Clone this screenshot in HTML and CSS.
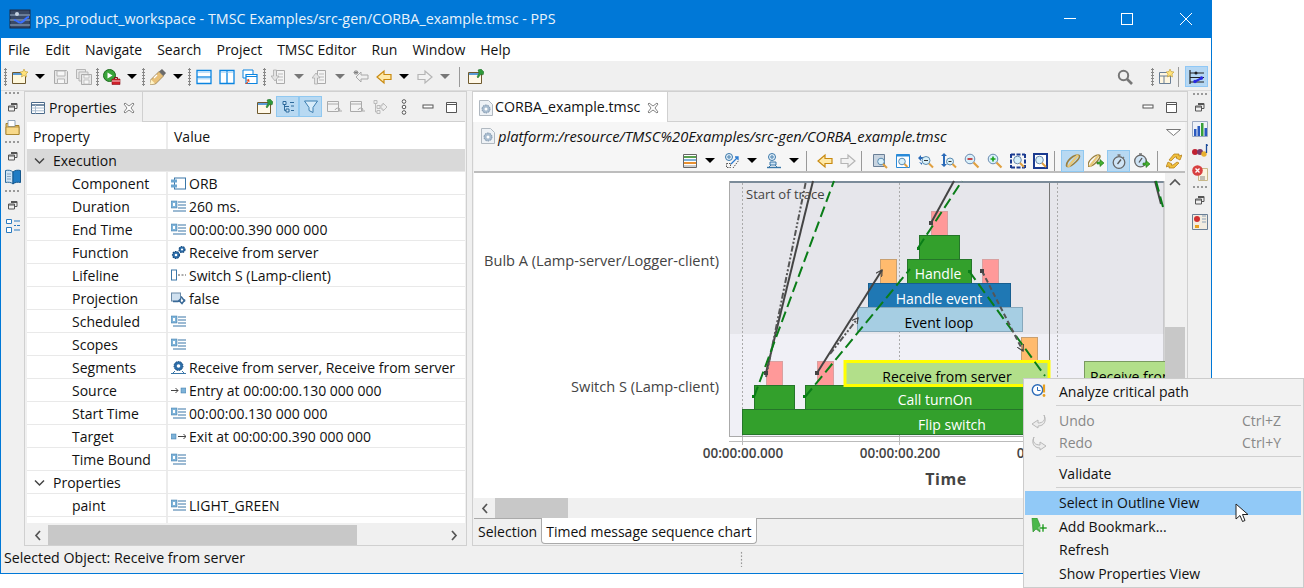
FILE: index.html
```html
<!DOCTYPE html>
<html lang="en">
<head>
<meta charset="utf-8">
<title>PPS</title>
<link rel="stylesheet" href="styles.css">
</head>
<body>
<svg class="defs" width="0" height="0">
  <defs>
    <symbol id="restore" viewBox="0 0 16 16"><path d="M6 4.500h6v5H10M3.500 7h6v5h-6zM3.500 8h6M6 5.500h6" fill="none" stroke="#555"/></symbol>
    <symbol id="min" viewBox="0 0 16 16"><rect x="3" y="6" width="10" height="3" fill="#fff" stroke="#555"/></symbol>
    <symbol id="max" viewBox="0 0 16 16"><path d="M3.500 3.500h10v10h-10zM3.500 5.500h10" fill="#fff" stroke="#555"/></symbol>
    <symbol id="close" viewBox="0 0 12 12"><path d="M2 1l4 3 4-3 1 1-3 4 3 4-1 1-4-3-4 3-1-1 3-4-3-4z" fill="#fff" stroke="#777" stroke-width=".9"/></symbol>
    <symbol id="new" viewBox="0 0 16 16"><path d="M.5 3.500h13v11H.500z" fill="#fff8dc" stroke="#6f5a2e"/><path d="M1 4h12v2H1z" fill="#5b9bd5"/><path d="M12 0l1 2.500 3 .5-2 2 .5 3-2.500-1.500-2.500 1.500.5-3-2-2 3-.5z" fill="#ffe27a" stroke="#c09a30" stroke-width=".6"/></symbol>
    <symbol id="save" viewBox="0 0 16 16"><path d="M1.500 1.500h12l1 1v12h-13z" fill="#e8e8e8" stroke="#aaa"/><path d="M4 2h8v5H4zM4.500 10h7v4.500h-7z" fill="#f6f6f6" stroke="#b5b5b5"/></symbol>
    <symbol id="saveall" viewBox="0 0 16 16"><path d="M.5.500h9v9h-9z" fill="#e8e8e8" stroke="#b5b5b5"/><path d="M3 3h9v9H3z" fill="#e8e8e8" stroke="#b5b5b5"/><path d="M5.500 5.500h10v10h-10z" fill="#e8e8e8" stroke="#aaa"/><path d="M8 6h5v3H8zM8 11h5v4H8z" fill="#f6f6f6" stroke="#b5b5b5" stroke-width=".7"/></symbol>
    <symbol id="run" viewBox="0 0 18 16"><circle cx="6.500" cy="6.500" r="6" fill="#3aa53a" stroke="#1d6a1d"/><path d="M4.500 3.500l5 3-5 3z" fill="#fff"/><path d="M9 10h8v5.500H9z" fill="#d0202a" stroke="#8a1018" stroke-width=".6"/><path d="M9 12h8" stroke="#fff" stroke-width=".8"/><path d="M11.500 10V8.500h3V10" fill="none" stroke="#8a1018"/></symbol>
    <symbol id="pen" viewBox="0 0 16 16"><path d="M0 15.500l1-5L9 2.500l4.500 4.500-8 8z" fill="#e8c078" stroke="#8a7040" stroke-width=".7"/><path d="M9 2.500l3-2.500 4 4-2.500 3z" fill="#6a6a6a"/><path d="M0 15.500l1-5 4 4z" fill="#fff4c8"/><path d="M4 9l3-3" stroke="#fff" stroke-width="1.200"/></symbol>
    <symbol id="lay1" viewBox="0 0 16 16"><path d="M1 1.500h14v13H1z" fill="#fff" stroke="#0a84e0" stroke-width="1.300"/><path d="M1 8h14" stroke="#0a84e0" stroke-width="1.300"/><path d="M2 2.500h12v1.500H2zM2 9h12v1.500H2z" fill="#bfe0fa"/></symbol>
    <symbol id="lay2" viewBox="0 0 16 16"><path d="M1 1.500h14v13H1z" fill="#fff" stroke="#0a84e0" stroke-width="1.300"/><path d="M8 1.500v13" stroke="#0a84e0" stroke-width="1.300"/><path d="M2 2.500h5.300v1.500H2zM8.700 2.500H14v1.500H8.700z" fill="#bfe0fa"/></symbol>
    <symbol id="lay3" viewBox="0 0 16 16"><path d="M1 1h10v8H1z" fill="#fff" stroke="#0a84e0"/><path d="M4 5.500h11v9H4z" fill="#fff" stroke="#0a84e0" stroke-width="1.200"/><path d="M4 7.500h11" stroke="#0a84e0"/><path d="M7 10l-3 1 2 1-3 3h2l2-3 1 2z" fill="#e24a1c"/></symbol>
    <symbol id="docdn" viewBox="0 0 16 16"><path d="M5.500 1.500h8v13h-8z" fill="#f4f4f4" stroke="#aaa"/><path d="M7 5h5M7 8h5M7 11h5" stroke="#bbb"/><path d="M2.500 1v6H0l4 5 4-5H5.500V1z" fill="#e4e4e4" stroke="#a5a5a5" stroke-width=".7"/></symbol>
    <symbol id="docup" viewBox="0 0 16 16"><path d="M5.500 1.500h8v13h-8z" fill="#f4f4f4" stroke="#aaa"/><path d="M7 5h5M7 8h5M7 11h5" stroke="#bbb"/><path d="M2.500 15V9H0l4-5 4 5H5.500v6z" fill="#e4e4e4" stroke="#a5a5a5" stroke-width=".7"/></symbol>
    <symbol id="backstar" viewBox="0 0 16 16"><path d="M15 6h-7V3L3 8l5 5v-3h7z" fill="#efefef" stroke="#a8a8a8"/><path d="M3 1v5M.5 3.500h5M1 2l4 3M5 2L1 5" stroke="#777" stroke-width=".8"/></symbol>
    <symbol id="back" viewBox="0 0 16 16"><path d="M15 5.500H8V2L1 8l7 6v-3.500h7z" fill="#ffe9a8" stroke="#c98a10" stroke-width="1.200"/></symbol>
    <symbol id="fwd" viewBox="0 0 16 16"><path d="M1 5.500h7V2l7 6-7 6v-3.500H1z" fill="#f2f2f2" stroke="#b5b5b5" stroke-width="1.200"/></symbol>
    <symbol id="pinwin" viewBox="0 0 16 16"><path d="M.5 3.500h13v11H.500z" fill="#fff8e8" stroke="#6f5a2e"/><path d="M1 4h12v2H1z" fill="#5b9bd5"/><path d="M10 1l3-1 3 3-1 3-2-1-3 4-1-1 2-4z" fill="#2f9a3a" stroke="#1e6a28" stroke-width=".5"/></symbol>
    <symbol id="search" viewBox="0 0 16 16"><circle cx="6.500" cy="6.500" r="4.700" fill="none" stroke="#777" stroke-width="2"/><path d="M10 10l5 5" stroke="#777" stroke-width="2.600"/></symbol>
    <symbol id="persp" viewBox="0 0 16 16"><path d="M1.500 3.500h11v11h-11zM1.500 7h11M6 7v7.500" fill="#fff6e0" stroke="#6a7f96"/><path d="M12 0l1 2.500 3 .5-2 2 .5 3-2.500-1.500-2.500 1.500.5-3-2-2 3-.5z" fill="#ffe27a" stroke="#c09a30" stroke-width=".6"/></symbol>
    <symbol id="ppsp" viewBox="0 0 16 16"><path d="M1 1v14" stroke="#222" stroke-width="1.200"/><path d="M1 4h14M1 8.500h14M1 13h14" stroke="#222"/><circle cx="7" cy="4" r="1.500" fill="#222"/><path d="M5 13l8-4" stroke="#2a2ae0" stroke-width="2"/><circle cx="12.500" cy="9" r="1.700" fill="#2a2ae0"/><circle cx="6" cy="12.500" r="1.700" fill="#2a2ae0"/></symbol>
    <symbol id="table" viewBox="0 0 16 16"><path d="M1.500 2.500h13v11h-13z" fill="#fff" stroke="#4a6a8a"/><path d="M1.500 5h13" stroke="#4a6a8a" stroke-width="1.500"/><path d="M1.500 8h13M1.500 10.800h13M5.500 5v8.500" stroke="#a8bccf"/></symbol>
    <symbol id="treebtn" viewBox="0 0 16 16"><path d="M3 2.500h3v3H3zM6 10h3v3H6zM10 3.500h4M11 7h3M11 11.500h3M4.500 5.500v6H6M4.500 7.500H9" fill="#cfe6f7" stroke="#2d6a9c"/></symbol>
    <symbol id="filter" viewBox="0 0 16 16"><path d="M1.500 2h13L10 8.500v5L6 11.500v-3z" fill="#d8ecfa" stroke="#3d7eb0"/></symbol>
    <symbol id="graydoc1" viewBox="0 0 16 16"><path d="M1.500 2.500h11v10h-11z" fill="#f3f3f3" stroke="#aaa"/><path d="M1.500 5h11" stroke="#aaa"/><path d="M9 11a3 3 0 0 1 5-1l-1 2h3" fill="none" stroke="#aaa"/></symbol>
    <symbol id="graytree" viewBox="0 0 16 16"><path d="M2 1.500h3v3H2zM5 6.500h3v3H5zM5 11.500h3v3H5zM3.500 4.500V13H5" fill="#eee" stroke="#bbb"/><path d="M15 8l-4-4v2H9v4h2v2z" fill="#eee" stroke="#bbb"/></symbol>
    <symbol id="dots" viewBox="0 0 8 16"><circle cx="4" cy="2.500" r="1.800" fill="#fff" stroke="#555"/><circle cx="4" cy="8" r="1.800" fill="#fff" stroke="#555"/><circle cx="4" cy="13.500" r="1.800" fill="#fff" stroke="#555"/></symbol>
    <symbol id="listv" viewBox="0 0 15 13"><rect x="0" y="1" width="6" height="7" fill="#7fb3d8" stroke="#3a77a8" stroke-width=".5"/><rect x="2" y="3" width="2" height="3" fill="#fff"/><path d="M7 2h8M7 5h8M7 8h8M2 11h13" stroke="#3a77a8" stroke-width="1.100"/></symbol>
    <symbol id="comp" viewBox="0 0 15 12"><rect x="3.500" y=".5" width="11" height="11" fill="#fff" stroke="#3a77a8"/><rect x="0" y="2" width="6" height="3" fill="#6da6d0"/><rect x="0" y="7" width="6" height="3" fill="#6da6d0"/></symbol>
    <symbol id="gears" viewBox="0 0 15 15"><circle cx="5" cy="10" r="3.500" fill="#2d6da8" stroke="#174a7c" stroke-width="1.200" stroke-dasharray="1.500 1"/><circle cx="5" cy="10" r="1.300" fill="#fff"/><circle cx="11" cy="4.500" r="3" fill="#2d6da8" stroke="#174a7c" stroke-width="1.200" stroke-dasharray="1.500 1"/><circle cx="11" cy="4.500" r="1.100" fill="#fff"/></symbol>
    <symbol id="life" viewBox="0 0 15 12"><rect x=".5" y=".5" width="5" height="10" fill="#fff" stroke="#3a77a8"/><path d="M7 5.500h2M10.500 5.500h2M14 5.500h1" stroke="#555"/></symbol>
    <symbol id="proj" viewBox="0 0 15 12"><rect x=".5" y=".5" width="9" height="8" fill="#cfe0ef" stroke="#6a8aa8"/><path d="M2 9h5l3-3M8 8l3 3 3-4M10 4l4 5" fill="none" stroke="#3a6a98" stroke-width="1.500"/></symbol>
    <symbol id="seg" viewBox="0 0 15 15"><circle cx="7.500" cy="6" r="4.500" fill="#2d6da8" stroke="#174a7c" stroke-dasharray="1.500 1"/><circle cx="7.500" cy="6" r="1.800" fill="#fff"/><path d="M0 13.500h15" stroke="#3a77a8"/><path d="M2 13l2-2M13 13l-2-2" stroke="#3a77a8"/></symbol>
    <symbol id="src" viewBox="0 0 15 9"><path d="M0 4.500h7M4.500 2l2.500 2.500L4.500 7" fill="none" stroke="#444"/><rect x="10" y="2" width="5" height="5" fill="#7fb3d8" stroke="#3a77a8" stroke-width=".5"/></symbol>
    <symbol id="tgt" viewBox="0 0 15 9"><rect x="0" y="2" width="5" height="5" fill="#7fb3d8" stroke="#3a77a8" stroke-width=".5"/><path d="M7 4.500h8M12.500 2l2.500 2.500L12.500 7" fill="none" stroke="#444"/></symbol>
    <symbol id="tmsc" viewBox="0 0 14 16"><path d="M.5.500h9l4 4v11H.500z" fill="#eef2f6" stroke="#b0b8c0"/><circle cx="7" cy="9" r="4" fill="#a8bccf" stroke="#7a90a8" stroke-dasharray="1.500 1"/><circle cx="7" cy="9" r="1.500" fill="#fff"/></symbol>
    <symbol id="tb-table" viewBox="0 0 16 16"><path d="M1.500 1.500h13v13h-13z" fill="#fff" stroke="#666"/><path d="M2 4h12" stroke="#5aa050" stroke-width="2"/><path d="M2 7h12" stroke="#7fb0d8" stroke-width="2"/><path d="M2 10h12" stroke="#e89030" stroke-width="2"/><path d="M2 13h12" stroke="#bbb" stroke-width="1.500"/></symbol>
    <symbol id="tb-at1" viewBox="0 0 16 16"><circle cx="5" cy="4" r="3.500" fill="#e4f0fa" stroke="#3a77a8"/><circle cx="5" cy="4" r="1.200" fill="none" stroke="#3a77a8"/><path d="M2.500 10.500h4v4h-4zM9 15l6-8" fill="none" stroke="#555" stroke-dasharray="1.500 1"/><path d="M7 11l7-7M11 4h3v3" fill="none" stroke="#2a7ad0" stroke-width="1.300"/></symbol>
    <symbol id="tb-at2" viewBox="0 0 16 16"><circle cx="6" cy="4" r="3.500" fill="#e4f0fa" stroke="#3a77a8"/><circle cx="6" cy="4" r="1.200" fill="none" stroke="#3a77a8"/><path d="M4 9h6v3H4z" fill="#d0e4f4" stroke="#3a77a8"/><path d="M1 14.500h14" stroke="#3a77a8" stroke-width="1.400"/><path d="M3 14l2-2M11 14l-2-2" stroke="#3a77a8"/></symbol>
    <symbol id="mag-page" viewBox="0 0 16 16"><path d="M1.500 1.500h11v12h-11z" fill="#c8d4e0" stroke="#6a7f96"/><circle cx="9" cy="8.500" r="3.300" fill="#d8f0fa" stroke="#5a8ab0"/><path d="M11 11l4 4" stroke="#e0a040" stroke-width="2"/></symbol>
    <symbol id="mag-box" viewBox="0 0 16 16"><path d="M1.500 1.500h13v13h-13z" fill="#fff" stroke="#2a8ad8"/><path d="M1.500 1.500h13v2h-13z" fill="#2a8ad8"/><circle cx="7" cy="8.500" r="3.300" fill="#d8f0fa" stroke="#5a8ab0"/><path d="M9.500 11l3 3" stroke="#e0a040" stroke-width="2"/></symbol>
    <symbol id="mag-h" viewBox="0 0 16 16"><path d="M0 5l3-3v2h3v2H3v2z" fill="#2a6ab8"/><circle cx="8" cy="7.500" r="4" fill="#d8f0fa" stroke="#5a8ab0"/><path d="M6 7.500h4" stroke="#333"/><path d="M11 10.500l4 4" stroke="#e0a040" stroke-width="2"/><path d="M1 9l3 3v-2" fill="#2a6ab8"/></symbol>
    <symbol id="mag-v" viewBox="0 0 16 16"><path d="M3 0l3 3H4v8h2l-3 3-3-3h2V3H0z" fill="#2a6ab8"/><circle cx="9" cy="8.500" r="3.500" fill="#d8f0fa" stroke="#5a8ab0"/><path d="M7.500 8.500h3" stroke="#333"/><path d="M11.500 11l3.500 3.500" stroke="#e0a040" stroke-width="2"/></symbol>
    <symbol id="mag-m" viewBox="0 0 16 16"><circle cx="6" cy="6" r="4.800" fill="#d8f0fa" stroke="#6a8ab0"/><path d="M3.500 6h5" stroke="#c02020" stroke-width="1.600"/><path d="M9.500 9.500l5 5" stroke="#e0a040" stroke-width="2.200"/></symbol>
    <symbol id="mag-p" viewBox="0 0 16 16"><circle cx="6" cy="6" r="4.800" fill="#d8f0fa" stroke="#6a8ab0"/><path d="M3.500 6h5M6 3.500v5" stroke="#18a018" stroke-width="1.600"/><path d="M9.500 9.500l5 5" stroke="#e0a040" stroke-width="2.200"/></symbol>
    <symbol id="mag-fit1" viewBox="0 0 16 16"><path d="M1 1.500h14M1 14.500h14M1 1v14M15 1v14" stroke="#1a3a90" stroke-width="2" stroke-dasharray="4 1.500"/><circle cx="7.500" cy="7" r="3.800" fill="#d8f0fa" stroke="#6a8ab0"/><path d="M10 10l4 4" stroke="#e0a040" stroke-width="2"/></symbol>
    <symbol id="mag-fit2" viewBox="0 0 16 16"><rect width="15" height="16" fill="#1a3a90"/><rect x="2" y="2" width="11" height="12" fill="#fff"/><circle cx="6.500" cy="7" r="3.800" fill="#d8f0fa" stroke="#6a8ab0"/><path d="M9 10l4 4" stroke="#e0a040" stroke-width="2"/></symbol>
    <symbol id="link" viewBox="0 0 16 16"><path d="M1.500 12.500c0-3 3.500-7 6.500-9 3-2 6.500-2 6.500 0s-3 5-6 7.500-7 3.500-7 1.500z" fill="none" stroke="#9a8040" stroke-width="1.600"/><path d="M3 14l10-12" stroke="#e8c878" stroke-width="2.400"/></symbol>
    <symbol id="link-go" viewBox="0 0 16 16"><path d="M0 12.500c0-3 3-7 6-9 3-2 6-2 6 0s-3 5-5 7-7 4-7 2z" fill="none" stroke="#9a8040" stroke-width="1.500"/><path d="M1.500 13.500l9-11" stroke="#e8c878" stroke-width="2.200"/><path d="M9 9h3V6.500l4 3.500-4 3.500V11H9z" fill="#44b030" stroke="#207018" stroke-width=".6"/></symbol>
    <symbol id="watch" viewBox="0 0 16 16"><circle cx="8" cy="9.500" r="5.800" fill="#cfe4f5" stroke="#666" stroke-width="1.300"/><path d="M6.500 2h3M8 2v2M13 4l-1.500 1.500" stroke="#777" stroke-width="1.300"/><path d="M6.500 11L10 6.500" stroke="#555" stroke-width="1.300"/></symbol>
    <symbol id="watch-go" viewBox="0 0 16 16"><circle cx="6.500" cy="8" r="5.800" fill="#cfe4f5" stroke="#666" stroke-width="1.300"/><path d="M5 1h3M6.500 1v2" stroke="#777" stroke-width="1.300"/><path d="M5 9.500L8 5" stroke="#555" stroke-width="1.300"/><path d="M9 10h3V7.500l4 3.500-4 3.500V12H9z" fill="#44b030" stroke="#207018" stroke-width=".6"/></symbol>
    <symbol id="sync" viewBox="0 0 16 16"><path d="M8 1h5v2l3-1-2 5-4-2 1-1H9L5 8 3 7z" fill="#f0c040" stroke="#b07810" stroke-width=".7"/><path d="M8 15H3v-2l-3 1 2-5 4 2-1 1h2l4-3 2 1z" fill="#f0c040" stroke="#b07810" stroke-width=".7"/></symbol>
    <symbol id="t-folder" viewBox="0 0 16 16"><path d="M1 3.500h6l2 2h5v9H1z" fill="#f3c76a" stroke="#a37f28"/><path d="M3 .5h7v6H3z" fill="#fff" stroke="#7a90a8" stroke-width=".8"/><path d="M1 7h13v7.500H1z" fill="#f8d98a" stroke="#a37f28" stroke-width=".8"/></symbol>
    <symbol id="t-book" viewBox="0 0 16 16"><path d="M8 3C6 1 3 1 .5 1.500v12C3 13 6 13 8 15z" fill="#cfe4f5" stroke="#2a6a9c"/><path d="M8 3c2-2 5-2 7.500-1.500v12C13 13 10 13 8 15z" fill="#1f7cc4" stroke="#15578c"/><path d="M2 5h4M2 7.500h4M2 10h4" stroke="#6a8aa8" stroke-width=".7"/></symbol>
    <symbol id="t-outline" viewBox="0 0 16 16"><path d="M1.500 1.500h5v4h-5zM1.500 9.500h5v5h-5z" fill="#fff" stroke="#2a7ac0"/><path d="M9 3h6M9 7.500h2M12 7.500h3M9 12h6" stroke="#2a7ac0"/></symbol>
    <symbol id="t-chart" viewBox="0 0 16 16"><path d="M.5.500h15v15H.500z" fill="#eef2f8" stroke="#9aa8c0"/><path d="M2 15V8h2.500v7zM5.500 15V5H8v10z" fill="#2a5ac0"/><path d="M9 15V2h2.500v13z" fill="#38a038"/><path d="M12.500 15V7H15v8z" fill="#2a5ac0"/></symbol>
    <symbol id="t-notes" viewBox="0 0 16 16"><circle cx="3" cy="9" r="3" fill="#c02030"/><circle cx="8" cy="9" r="3" fill="#7a3a6a"/><circle cx="12" cy="11" r="2.700" fill="#e8b030"/><path d="M14.500 1v9" stroke="#1a4a9a" stroke-width="1.300"/><path d="M14.500 1l1.500 2" stroke="#1a4a9a"/></symbol>
    <symbol id="t-err" viewBox="0 0 16 16"><path d="M6.500 3.500h9v12h-9z" fill="#fbf4e0" stroke="#c8b888"/><circle cx="5.500" cy="5.500" r="5.300" fill="#d84040"/><path d="M3.500 3.500l4 4M7.500 3.500l-4 4" stroke="#fff" stroke-width="1.300"/><path d="M8 12h5M8 14h5" stroke="#888"/></symbol>
    <symbol id="t-pic" viewBox="0 0 16 16"><path d="M.5.500h15v15H.500z" fill="#f2ece0" stroke="#6a7f96"/><circle cx="5" cy="5" r="3" fill="#d03030"/><path d="M3 14v-3h4v3z" fill="#e8a020"/><path d="M10 2h4M10 5h4M10 8h4" stroke="#8aa0b8"/></symbol>
    <symbol id="m-crit" viewBox="0 0 16 16"><circle cx="6.500" cy="7" r="5.200" fill="#fff" stroke="#2a6ab8" stroke-width="1.400"/><path d="M6.500 4v3.500h3" fill="none" stroke="#2a6ab8"/><path d="M13 1.500v8" stroke="#e8a020" stroke-width="2.200"/><circle cx="13" cy="12.500" r="1.400" fill="#e8a020"/></symbol>
    <symbol id="m-undo" viewBox="0 0 16 16"><path d="M13 2c2 5-1 8-6 8V7L1 11l6 4v-2c6 0 9-5 6-11z" fill="#ececec" stroke="#b8b8b8"/></symbol>
    <symbol id="m-redo" viewBox="0 0 16 16"><path d="M3 2C1 7 4 10 9 10V7l6 4-6 4v-2C3 13 0 8 3 2z" fill="#ececec" stroke="#b8b8b8"/></symbol>
    <symbol id="m-book" viewBox="0 0 16 16"><path d="M1 0h5l3 7v7L5 11 2 14z" fill="#4ab84a" stroke="#2a8a2a" stroke-width=".6"/><path d="M8 9h3V6h2v3h3v2h-3v3h-2v-3H8z" fill="#2ea02e" stroke="#fff" stroke-width=".5"/></symbol>
    <symbol id="app" viewBox="0 0 22 22"><rect x="1" y="2" width="20" height="18" fill="#3a4a66" stroke="#1c2a44"/><path d="M1 7h20M1 12h20M1 17h20" stroke="#9ab0c8"/><path d="M5 12c4 0 4 4 8 2s3-5 7-5" fill="none" stroke="#3a70ff" stroke-width="2"/><circle cx="8" cy="6" r="2" fill="#c8d4e4"/></symbol>
  </defs>
</svg>

<div class="window">
  <header class="titlebar">
    <svg class="app-ic"><use href="#app"/></svg>
    <span class="title">pps_product_workspace - TMSC Examples/src-gen/CORBA_example.tmsc - PPS</span>
    <div class="winctl">
      <svg width="58" height="38"><path d="M23 18.500h12" stroke="#fff"/></svg>
      <svg width="59" height="38"><rect x="22.500" y="13.500" width="11" height="11" fill="none" stroke="#fff"/></svg>
      <svg width="53" height="38"><path d="M22 13l12 12M34 13L22 25" stroke="#fff"/></svg>
    </div>
  </header>

  <nav class="menubar">
    <span>File</span><span>Edit</span><span>Navigate</span><span>Search</span><span>Project</span><span>TMSC Editor</span><span>Run</span><span>Window</span><span>Help</span>
  </nav>

  <div class="toolbar">
    <i class="grip"></i>
    <span class="b"><svg class="ic"><use href="#new"/></svg></span><i class="ar"></i>
    <span class="b"><svg class="ic"><use href="#save"/></svg></span>
    <span class="b"><svg class="ic"><use href="#saveall"/></svg></span>
    <i class="grip"></i>
    <span class="b"><svg class="ic wide"><use href="#run"/></svg></span><i class="ar"></i>
    <i class="grip"></i>
    <span class="b"><svg class="ic"><use href="#pen"/></svg></span><i class="ar"></i>
    <i class="grip"></i>
    <span class="b"><svg class="ic"><use href="#lay1"/></svg></span>
    <span class="b"><svg class="ic"><use href="#lay2"/></svg></span>
    <span class="b"><svg class="ic"><use href="#lay3"/></svg></span>
    <i class="grip g2"></i>
    <span class="b"><svg class="ic"><use href="#docdn"/></svg></span><i class="ar off"></i>
    <span class="b"><svg class="ic"><use href="#docup"/></svg></span><i class="ar off"></i>
    <span class="b"><svg class="ic"><use href="#backstar"/></svg></span>
    <span class="b"><svg class="ic"><use href="#back"/></svg></span><i class="ar"></i>
    <span class="b"><svg class="ic"><use href="#fwd"/></svg></span><i class="ar off"></i>
    <i class="sep"></i>
    <span class="b"><svg class="ic"><use href="#pinwin"/></svg></span>
    <span class="spring"></span>
    <span class="b"><svg class="ic"><use href="#search"/></svg></span>
    <i class="grip g3"></i>
    <span class="b bn"><svg class="ic"><use href="#persp"/></svg></span>
    <i class="sep s2"></i>
    <span class="pick"><svg class="ic"><use href="#ppsp"/></svg></span>
  </div>

  <div class="workarea">
    <aside class="trim">
      <i class="hgrip"></i>
      <svg class="ic"><use href="#restore"/></svg>
      <svg class="ic"><use href="#t-folder"/></svg>
      <i class="hgrip"></i>
      <svg class="ic"><use href="#restore"/></svg>
      <svg class="ic"><use href="#t-book"/></svg>
      <i class="hgrip"></i>
      <svg class="ic"><use href="#restore"/></svg>
      <svg class="ic"><use href="#t-outline"/></svg>
    </aside>

    <section class="panel props">
      <div class="phead">
        <div class="ptab">
          <svg class="ic"><use href="#table"/></svg>
          <span>Properties</span>
          <svg class="x"><use href="#close"/></svg>
        </div>
        <div class="pbar">
          <span class="vb"><svg class="ic"><use href="#pinwin"/></svg></span>
          <span class="vb on"><svg class="ic"><use href="#treebtn"/></svg></span>
          <span class="vb on"><svg class="ic"><use href="#filter"/></svg></span>
          <span class="vb"><svg class="ic"><use href="#graydoc1"/></svg></span>
          <span class="vb"><svg class="ic"><use href="#graydoc1"/></svg></span>
          <span class="vb"><svg class="ic"><use href="#graytree"/></svg></span>
          <span class="vb dots"><svg class="dot"><use href="#dots"/></svg></span>
          <span class="vb"><svg class="ic"><use href="#min"/></svg></span>
          <span class="vb"><svg class="ic"><use href="#max"/></svg></span>
        </div>
      </div>
      <div class="tbl">
        <div class="row head"><div class="k">Property</div><div class="v">Value</div></div>
        <div class="row grp sel"><div class="k"><svg class="chev"><path d="M1 1.500l4.500 4.500L10 1.500" fill="none" stroke="#444" stroke-width="1.500"/></svg>Execution</div><div class="v"></div></div>
        <div class="row"><div class="k">Component</div><div class="v"><svg class="vi"><use href="#comp"/></svg>ORB</div></div>
        <div class="row"><div class="k">Duration</div><div class="v"><svg class="vi"><use href="#listv"/></svg>260 ms.</div></div>
        <div class="row"><div class="k">End Time</div><div class="v"><svg class="vi"><use href="#listv"/></svg>00:00:00.390 000 000</div></div>
        <div class="row"><div class="k">Function</div><div class="v"><svg class="vi"><use href="#gears"/></svg>Receive from server</div></div>
        <div class="row"><div class="k">Lifeline</div><div class="v"><svg class="vi"><use href="#life"/></svg>Switch S (Lamp-client)</div></div>
        <div class="row"><div class="k">Projection</div><div class="v"><svg class="vi"><use href="#proj"/></svg>false</div></div>
        <div class="row"><div class="k">Scheduled</div><div class="v"><svg class="vi"><use href="#listv"/></svg></div></div>
        <div class="row"><div class="k">Scopes</div><div class="v"><svg class="vi"><use href="#listv"/></svg></div></div>
        <div class="row"><div class="k">Segments</div><div class="v"><svg class="vi"><use href="#seg"/></svg>Receive from server, Receive from server</div></div>
        <div class="row"><div class="k">Source</div><div class="v"><svg class="vi"><use href="#src"/></svg>Entry at 00:00:00.130 000 000</div></div>
        <div class="row"><div class="k">Start Time</div><div class="v"><svg class="vi"><use href="#listv"/></svg>00:00:00.130 000 000</div></div>
        <div class="row"><div class="k">Target</div><div class="v"><svg class="vi"><use href="#tgt"/></svg>Exit at 00:00:00.390 000 000</div></div>
        <div class="row"><div class="k">Time Bound</div><div class="v"><svg class="vi"><use href="#listv"/></svg></div></div>
        <div class="row grp"><div class="k"><svg class="chev"><path d="M1 1.500l4.500 4.500L10 1.500" fill="none" stroke="#444" stroke-width="1.500"/></svg>Properties</div><div class="v"></div></div>
        <div class="row"><div class="k">paint</div><div class="v"><svg class="vi"><use href="#listv"/></svg>LIGHT_GREEN</div></div>
        <div class="row stub"><div class="k"></div><div class="v"></div></div>
      </div>
      <div class="hscroll hs-props">
        <svg class="sa"><path d="M6 2L2 6.500 6 11" fill="none" stroke="#555" stroke-width="1.700"/></svg>
        <div class="track"><div class="thumb th-props"></div></div>
        <svg class="sa"><path d="M2 2l4 4.500L2 11" fill="none" stroke="#555" stroke-width="1.700"/></svg>
      </div>
    </section>

    <section class="panel editor">
      <div class="phead ehead">
        <div class="etab">
          <svg class="ic"><use href="#tmsc"/></svg>
          <span>CORBA_example.tmsc</span>
          <svg class="x"><use href="#close"/></svg>
        </div>
        <div class="pbar">
          <span class="vb"><svg class="ic"><use href="#min"/></svg></span>
          <span class="vb"><svg class="ic"><use href="#max"/></svg></span>
        </div>
      </div>
      <div class="ebody">
        <div class="crumb">
          <svg class="ic"><use href="#tmsc"/></svg>
          <em>platform:/resource/TMSC%20Examples/src-gen/CORBA_example.tmsc</em>
          <svg class="tri" width="16" height="8"><path d="M.5.500h14L7.500 6.500z" fill="#fff" stroke="#777"/></svg>
        </div>
        <div class="etools">
          <span class="b"><svg class="ic"><use href="#tb-table"/></svg></span><i class="ar a2"></i>
          <span class="b"><svg class="ic"><use href="#tb-at1"/></svg></span><i class="ar a2"></i>
          <span class="b"><svg class="ic"><use href="#tb-at2"/></svg></span><i class="ar a2"></i>
          <i class="sep s3"></i>
          <span class="b"><svg class="ic"><use href="#back"/></svg></span>
          <span class="b"><svg class="ic"><use href="#fwd"/></svg></span>
          <i class="sep s3"></i>
          <span class="b"><svg class="ic"><use href="#mag-page"/></svg></span>
          <span class="b"><svg class="ic"><use href="#mag-box"/></svg></span>
          <span class="b"><svg class="ic"><use href="#mag-h"/></svg></span>
          <span class="b"><svg class="ic"><use href="#mag-v"/></svg></span>
          <span class="b"><svg class="ic"><use href="#mag-m"/></svg></span>
          <span class="b"><svg class="ic"><use href="#mag-p"/></svg></span>
          <span class="b"><svg class="ic"><use href="#mag-fit1"/></svg></span>
          <span class="b"><svg class="ic"><use href="#mag-fit2"/></svg></span>
          <i class="sep s3"></i>
          <span class="b on"><svg class="ic"><use href="#link"/></svg></span>
          <span class="b"><svg class="ic"><use href="#link-go"/></svg></span>
          <span class="b on"><svg class="ic"><use href="#watch"/></svg></span>
          <span class="b"><svg class="ic"><use href="#watch-go"/></svg></span>
          <i class="sep s4"></i>
          <span class="b"><svg class="ic"><use href="#sync"/></svg></span>
        </div>
        <div class="chartwrap">
          <svg class="chart" viewBox="474 174 691 325" width="691" height="325">
            <defs>
              <marker id="ah" markerUnits="userSpaceOnUse" markerWidth="7" markerHeight="7" refX="6" refY="3.500" orient="auto"><path d="M0 0l6 3.500L0 7" fill="none" stroke="#444" stroke-width="1.200"/></marker>
            </defs>
            <rect x="729" y="182" width="435" height="153" fill="#e6e6eb"/>
            <rect x="729" y="335" width="435" height="103" fill="#f0f0f6"/>
            <path d="M729 183h435" stroke="#7b8b99" stroke-width="2"/>
            <path d="M729.500 182v256M1164 182v256M729 437.500h435" stroke="#aaa" fill="none"/>
            <path d="M742.500 184v254M899.500 184v258M1057.500 184v254" stroke="#aaa" stroke-dasharray="2 2"/>
            <path d="M1049.500 184v254" stroke="#777"/>
            <path d="M729 442.500h435M742.500 438v8M899.500 438v8M1057.500 438v8" stroke="#bbb"/>

            <text class="t-start" x="746" y="200">Start of trace</text>
            <text class="t-lane" x="719" y="267">Bulb A (Lamp-server/Logger-client)</text>
            <text class="t-lane" x="719" y="393">Switch S (Lamp-client)</text>

            <g stroke-width="1">
              <rect class="pink" x="931.500" y="212.500" width="16" height="24"/>
              <rect class="green" x="919.500" y="236.500" width="40" height="24"/>
              <rect class="green" x="907.500" y="260.500" width="64" height="24"/>
              <rect class="orange" x="880.500" y="260.500" width="16" height="24"/>
              <rect class="pink" x="982.500" y="260.500" width="16" height="24"/>
              <rect class="blue" x="868.500" y="284.500" width="142" height="24"/>
              <rect class="lblue" x="857.500" y="308.500" width="165" height="24"/>
              <rect class="orange" x="1021.500" y="338.500" width="16" height="24"/>
              <rect class="pink" x="766.500" y="362.500" width="16" height="24"/>
              <rect class="pink" x="817.500" y="362.500" width="16" height="24"/>
              <rect class="green" x="754.500" y="386.500" width="40" height="24"/>
              <rect class="green" x="805.500" y="386.500" width="260" height="24"/>
              <rect class="green" x="742.500" y="410.500" width="420" height="25"/>
              <rect class="recv" x="845" y="362.500" width="204" height="24"/>
              <rect class="recv2" x="1084.500" y="362.500" width="82" height="24"/>
            </g>
            <text class="t-w" x="938" y="280">Handle</text>
            <text class="t-w" x="939" y="304.500">Handle event</text>
            <text class="t-b" x="939" y="329">Event loop</text>
            <text class="t-b" x="947" y="383">Receive from server</text>
            <text class="t-w" x="935" y="406">Call turnOn</text>
            <text class="t-w" x="952" y="431">Flip switch</text>
            <text class="t-bs" x="1090" y="383">Receive from server</text>

            <g fill="none">
              <path class="dk" d="M766 374L813 182"/>
              <path class="dd" d="M766 378L806 182"/>
              <path class="gd" d="M754 398L834 182"/>
              <path class="dk" d="M817 374L882 271" marker-end="url(#ah)"/>
              <path class="dd" d="M830 355L858 319" marker-end="url(#ah)"/>
              <path class="gd" d="M805 398L910 270"/>
              <path class="gd" d="M918 249L962 182"/>
              <path class="dk" d="M931 224L954 182"/>
              <path class="gd" d="M969 272L1045 377"/>
              <path class="dd2" d="M982 272L1023 352" marker-end="url(#ah)"/>
              <path class="dk" d="M1155 182L1161 205"/>
              <path class="gd" d="M1156 182L1163 208"/>
            </g>
            <g fill="#444"><rect x="764" y="372" width="4" height="4"/><rect x="815" y="372" width="4" height="4"/><rect x="929" y="222" width="4" height="4"/><rect x="980" y="270" width="4" height="4"/></g>
            <g fill="#0a7d18"><rect x="752" y="396" width="3" height="3"/><rect x="803" y="396" width="3" height="3"/><rect x="917" y="248" width="3" height="3"/><rect x="968" y="271" width="3" height="3"/></g>

            <text class="t-ax" x="743" y="459">00:00:00.000</text>
            <text class="t-ax" x="900" y="459">00:00:00.200</text>
            <text class="t-ax" x="1057" y="459">00:00:00.400</text>
            <text class="t-time" x="946" y="486">Time</text>
          </svg>
          <div class="vscroll">
            <svg class="va" width="20" height="18"><path d="M5 12l5-5 5 5" fill="none" stroke="#555" stroke-width="1.700"/></svg>
            <div class="vthumb"></div>
          </div>
        </div>
        <div class="hscroll hs-ed">
          <svg class="sa"><path d="M6 2L2 6.500 6 11" fill="none" stroke="#555" stroke-width="1.700"/></svg>
          <div class="track"><div class="thumb th-ed"></div></div>
        </div>
        <div class="pages">
          <span class="pg">Selection</span>
          <span class="pg cur">Timed message sequence chart</span>
        </div>
      </div>
    </section>

    <aside class="trim rtrim">
      <i class="hgrip"></i>
      <svg class="ic"><use href="#restore"/></svg>
      <svg class="ic"><use href="#t-chart"/></svg>
      <svg class="ic"><use href="#t-notes"/></svg>
      <svg class="ic"><use href="#t-err"/></svg>
      <i class="hgrip second"></i>
      <svg class="ic"><use href="#restore"/></svg>
      <svg class="ic"><use href="#t-pic"/></svg>
    </aside>
  </div>

  <footer class="status">
    <span class="st-msg">Selected Object: Receive from server</span>
    <i class="stgrip"></i>
  </footer>
</div>

<div class="ctx">
  <div class="mi mi-a"><svg class="ic"><use href="#m-crit"/></svg><span>Analyze critical path</span></div>
  <hr>
  <div class="mi dis mi-u"><svg class="ic"><use href="#m-undo"/></svg><span>Undo</span><kbd>Ctrl+Z</kbd></div>
  <div class="mi dis mi-r"><svg class="ic"><use href="#m-redo"/></svg><span>Redo</span><kbd>Ctrl+Y</kbd></div>
  <hr>
  <div class="mi mi-v"><span>Validate</span></div>
  <hr>
  <div class="mi hi"><span>Select in Outline View</span></div>
  <div class="mi"><svg class="ic"><use href="#m-book"/></svg><span>Add Bookmark...</span></div>
  <div class="mi"><span>Refresh</span></div>
  <div class="mi mi-l"><span>Show Properties View</span></div>
</div>
<svg class="cursor" width="14" height="20" viewBox="0 0 14 20"><path d="M1 1v15l4-3.500 2.500 6 2.500-1-2.500-6H13z" fill="#fff" stroke="#222"/></svg>
</body>
</html>
```
FILE: styles.css
```css
* { box-sizing: border-box; }
html, body { margin: 0; padding: 0; background: #fff; overflow: hidden; }
body { width: 1304px; height: 588px; position: relative; font: 14px/1 "Open Sans", "Noto Sans", sans-serif; color: #111; }
.defs { position: absolute; }
i { display: block; font-style: normal; }
svg { display: block; }
.ic { width: 16px; height: 16px; flex: none; }
.ic.wide { width: 18px; }

.window { width: 1212px; height: 574px; border: 1px solid #0078d7; border-top: 0; background: #f0f0f0; display: flex; flex-direction: column; }

.titlebar { height: 38px; background: #0078d7; color: #fff; display: flex; align-items: center; padding-left: 8px; flex: none; }
.app-ic { width: 22px; height: 22px; }
.title { margin-left: 4px; font-size: 14.300px; color: #e9f3fb; }
.winctl { margin-left: auto; display: flex; }
.winctl svg { flex: none; }

.menubar { height: 23px; background: #fff; display: flex; align-items: center; padding-left: 7px; gap: 15px; flex: none; font-size: 14px; }

.toolbar { height: 30px; flex: none; display: flex; align-items: center; padding: 2px 3px 0 2px; background: #f0f0f0; border-bottom: 1px solid #dcdcdc; }
.b { width: 23px; height: 22px; display: flex; align-items: center; justify-content: center; flex: none; }
.bn { width: 21px; }
.ar { width: 18px; height: 5px; flex: none; background: #000; clip-path: polygon(4px 0, 14px 0, 9px 5px); }
.ar.off { background: #777; }
.ar.a2 { width: 19px; }
.grip { width: 5px; height: 18px; flex: none; background: radial-gradient(circle, #888 0 1px, transparent 1.200px) center top / 3px 3px repeat-y; }
.grip.g2 { margin-left: 1px; }
.grip.g3 { margin-left: 14px; }
.sep { width: 1px; height: 20px; background: #999; flex: none; margin: 0 4px 0 5px; }
.sep.s2 { margin: 0 6px 0 2px; }
.sep.s3 { margin: 0 6px 0 2px; }
.sep.s4 { margin: 0 4px; }
.spring { flex: 1; }
.pick { width: 23px; height: 21px; background: #b5d7f3; border: 1px solid #90c8f6; display: flex; align-items: center; justify-content: center; flex: none; }

.workarea { flex: 1; min-height: 0; display: flex; }
.trim { width: 23px; flex: none; display: flex; flex-direction: column; align-items: center; padding-top: 1px; gap: 5px; }
.hgrip { width: 17px; height: 2px; flex: none; background: radial-gradient(circle, #999 0 1px, transparent 1.100px) left center / 4px 2px repeat-x; }
.rtrim { width: 24px; gap: 6px; padding-top: 2px; }
.rtrim .hgrip { margin-bottom: -2px; }
.rtrim .hgrip.second { margin-top: -1px; }

.panel { border: 1px solid #d0d0d0; background: #f0f0f0; display: flex; flex-direction: column; flex: none; }
.props { width: 443px; padding-right: 1px; }
.editor { width: 716px; margin-left: 5px; }
.phead { height: 30px; flex: none; display: flex; justify-content: space-between; align-items: stretch; border-bottom: 1px solid #d0d0d0; }
.ptab { width: 118px; display: flex; align-items: center; padding: 1px 0 0 5px; border-right: 1px solid #d0d0d0; margin-bottom: -1px; background: #f0f0f0; }
.ptab span { margin-left: 3px; }
.etab span { margin-left: 1px; font-size: 14.200px; }
.ptab .x { margin-left: auto; margin-right: 7px; }
.x { width: 12px; height: 12px; flex: none; }
.etab { width: 195px; display: flex; align-items: center; padding: 1px 0 0 5px; background: #fff; border-right: 1px solid #d0d0d0; margin-bottom: -1px; }
.etab .x { margin-left: auto; margin-right: 8px; }
.pbar { display: flex; align-items: center; padding-right: 3px; }
.ehead .pbar { padding-right: 5px; }
.vb { width: 23px; height: 21px; flex: none; display: flex; align-items: center; justify-content: center; }
.vb.on { background: #b8d9f2; border: 1px solid #90c8f0; }
.vb.dots { width: 25px; }
.dot { width: 8px; height: 16px; }

.tbl { margin: 0 0 0 2px; flex: none; background: #fff; height: 401px; overflow: hidden; }
.row { height: 23px; display: grid; grid-template-columns: 141px 1fr; border-bottom: 1px solid #e9e9e9; align-items: center; }
.row .k { padding: 1px 0 0 45px; height: 100%; display: flex; align-items: center; border-right: 2px solid #ececec; }
.row .v { padding: 1px 0 0 3px; height: 100%; display: flex; align-items: center; white-space: nowrap; }
.row.head { height: 27px; border: 0; }
.row.head .k { padding-left: 6px; padding-top: 3px; }
.row.head .v { padding-left: 6px; padding-top: 3px; }
.row.grp .k { padding-left: 6px; }
.row.sel { background: #d9d9d9; }
.row.sel .k { border-right-color: #d9d9d9; }
.row.stub { height: 6px; border: 0; }
.chev { width: 12px; height: 8px; margin-right: 7px; margin-left: 1px; flex: none; }
.vi { width: 15px; height: 15px; margin-right: 3px; flex: none; }

.hscroll { height: 20px; flex: none; display: flex; align-items: center; background: #f0f0f0; }
.hs-props { margin: 2px 0 0 2px; padding: 0 7px 0 7px; }
.sa { width: 8px; height: 13px; flex: none; }
.track { flex: 1; height: 100%; display: flex; min-width: 0; }
.thumb { background: #c8c8c8; height: 100%; }
.th-props { width: 309px; margin-left: 6px; }
.hs-ed { padding-left: 7px; }
.th-ed { width: 73px; margin-left: 6px; }

.ebody { flex: 1; min-height: 0; display: flex; flex-direction: column; padding: 0 2px 3px 1px; background: #f0f0f0; }
.crumb { height: 27px; flex: none; background: #f6f6f6; display: flex; align-items: center; padding: 1px 0 0 6px; }
.crumb em { margin-left: 2px; font-size: 14.700px; }
.tri { margin-left: auto; margin-right: 3px; margin-top: -6px; }
.etools { height: 24px; flex: none; background: #f6f6f6; border-bottom: 2px solid #bdbdbd; display: flex; align-items: center; justify-content: flex-end; padding: 1px 0 0; }
.b.on { background: #b8d9f2; border: 1px solid #90c8f0; }
.chartwrap { height: 325px; flex: none; display: flex; background: #fff; }
.chart { flex: none; }
.vscroll { width: 20px; background: #f0f0f0; flex: none; display: flex; flex-direction: column; position: relative; }
.vthumb { height: 160px; background: #c8c8c8; margin-top: 136px; }
.chart text { font-family: "Open Sans", "Noto Sans", sans-serif; }
.pink { fill: #ff9999; stroke: #d9a0a0; }
.orange { fill: #ffbb6e; stroke: #c9a070; }
.green { fill: #33a02c; stroke: #25762a; }
.blue { fill: #1f78b4; stroke: #185f90; }
.lblue { fill: #a6cee3; stroke: #86a8bc; }
.recv { fill: #b2df8a; stroke: #ffff00; stroke-width: 3; }
.recv2 { fill: #b2df8a; stroke: #7a9a60; }
.t-w, .t-b { font-size: 14px; text-anchor: middle; fill: #fff; }
.t-b { fill: #000; }
.t-bs { font-size: 14px; fill: #000; }
.t-start { font-size: 13px; fill: #444; }
.t-lane { font-size: 14.600px; text-anchor: end; fill: #444; }
.t-ax { font-size: 13.500px; font-weight: 600; text-anchor: middle; fill: #444; }
.t-time { font-size: 16px; font-weight: 700; text-anchor: middle; fill: #444; letter-spacing: .5px; }
.dk { stroke: #444; stroke-width: 2; }
.dd { stroke: #555; stroke-width: 2; stroke-dasharray: 6 2 2 2 2 2; }
.dd2 { stroke: #555; stroke-width: 2; stroke-dasharray: 5 3; }
.gd { stroke: #0a7d18; stroke-width: 2; stroke-dasharray: 11 5; }

.pages { height: 25px; flex: none; display: flex; align-items: flex-start; border-top: 1px solid #aaa; background: #f0f0f0; }
.pg { height: 23px; padding: 6px 4px 0 4px; }
.pg.cur { background: #fff; border: 1px solid #aaa; border-top: 0; border-radius: 0 0 4px 4px; margin-top: -1px; height: 26px; padding-top: 7px; }

.status { height: 27px; flex: none; display: flex; align-items: center; padding: 0 0 2px 3px; font-size: 14.200px; }
.stgrip { margin-left: 495px; width: 3px; height: 16px; background: radial-gradient(circle, #999 0 1px, transparent 1.100px) center top / 3px 3.500px repeat-y; }

.ctx { position: absolute; left: 1023px; top: 378px; width: 281px; height: 210px; background: #f2f2f2; border: 1px solid #ccc; padding: 1px 2px 0 1px; }
.ctx hr { margin: 0 0 0 31px; border: 0; border-top: 1px solid #d0d0d0; height: 2px; }
.mi { height: 23px; position: relative; padding-left: 34px; display: flex; align-items: center; color: #111; }
.mi .ic { position: absolute; left: 6px; top: 3px; }
.mi.dis { height: 22px; color: #888; }
.mi-a { margin-bottom: 2px; }
.mi-u { margin-top: 3px; }
.mi-r { margin-bottom: 2px; }
.mi-v { margin-top: 4px; margin-bottom: 2px; }
.hi { background: #91c9f7; height: 24px; margin-top: 2px; }
.mi-l { margin-top: 1px; }
.mi kbd { font: inherit; margin-left: auto; margin-right: 20px; }

.cursor { position: absolute; left: 1235px; top: 503px; }
```
